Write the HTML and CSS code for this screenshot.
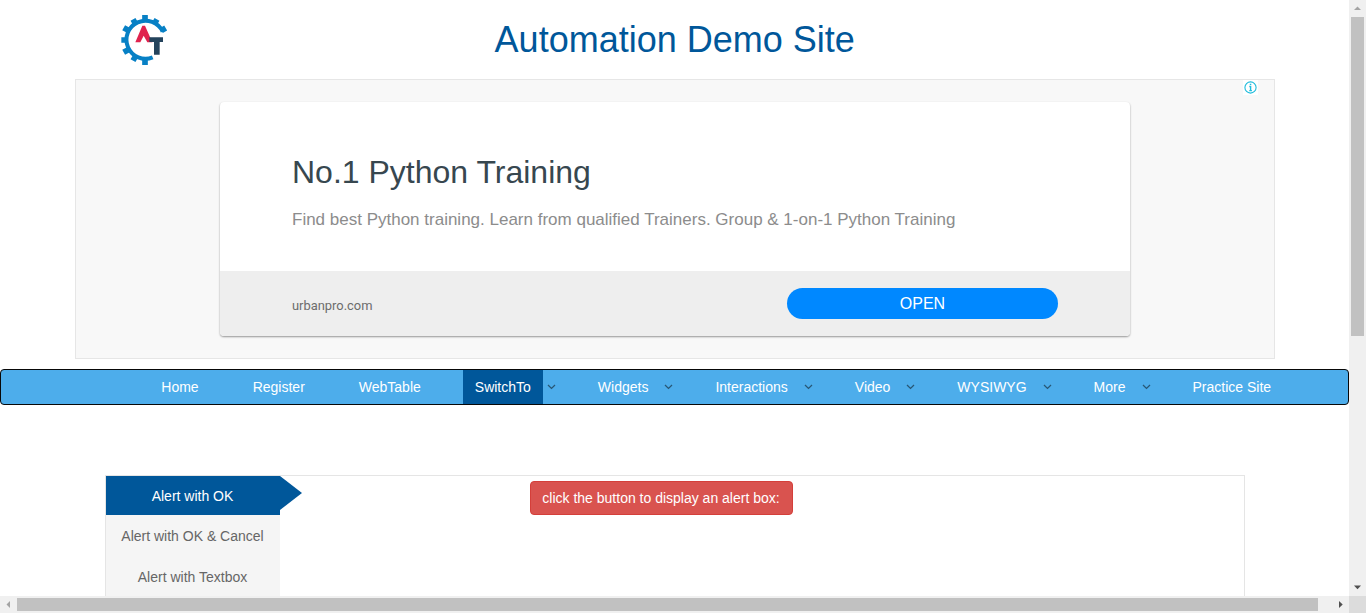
FILE: index.html
```html
<!DOCTYPE html>
<html lang="en">
<head>
<meta charset="utf-8">
<title>Alerts</title>
<link rel="stylesheet" href="styles.css">
</head>
<body>
<div class="window">
  <div class="page">
    <header class="header">
      <svg class="logo" viewBox="0 0 210 210" aria-label="Automation Testing">
        <g fill="none" stroke="#0780c5">
          <path d="M158 80A57 57 0 1 0 128 157" stroke-width="12"/>
          <g stroke-width="17">
            <path d="M105 47V30M134 55L141 43M154 77L167 69M76 55L69 43M55 76L41 68M47 105H34M55 134L41 142M76 155L69 167M105 163V180"/>
          </g>
        </g>
        <path d="M97 62H105L127 112H112L101 92L91 112H76Z" fill="#e0234e"/>
        <path d="M118 97H159V111H149V149H132V111H118Z" fill="#24435c"/>
      </svg>
      <h1 class="title">Automation Demo Site</h1>
    </header>

    <section class="ad">
      <svg class="ad-info" viewBox="0 0 15 15">
        <circle cx="7.5" cy="7.5" r="5.6" fill="none" stroke="#1ebcdc" stroke-width="1.1"/>
        <path d="M6.3 6.5H7.6V10.5M6.3 10.6H8.9M6.8 4.4H8.3" fill="none" stroke="#1ebcdc" stroke-width="1.4"/>
      </svg>
      <div class="ad-card">
        <div class="ad-body">
          <h2 class="ad-title">No.1 Python Training</h2>
          <p class="ad-text">Find best Python training. Learn from qualified Trainers. Group &amp; 1-on-1 Python Training</p>
        </div>
        <div class="ad-foot">
          <span class="ad-domain">urbanpro.com</span>
          <a class="ad-open">OPEN</a>
        </div>
      </div>
    </section>

    <nav class="nav">
      <div class="item"><a>Home</a></div>
      <div class="item"><a>Register</a></div>
      <div class="item"><a>WebTable</a></div>
      <div class="item"><a class="active">SwitchTo</a><svg class="caret" viewBox="0 0 13 8"><path d="M5 2L8.5 5.4L12 2"/></svg></div>
      <div class="item"><a>Widgets</a><svg class="caret" viewBox="0 0 13 8"><path d="M5 2L8.5 5.4L12 2"/></svg></div>
      <div class="item"><a>Interactions</a><svg class="caret" viewBox="0 0 13 8"><path d="M5 2L8.5 5.4L12 2"/></svg></div>
      <div class="item"><a>Video</a><svg class="caret" viewBox="0 0 13 8"><path d="M5 2L8.5 5.4L12 2"/></svg></div>
      <div class="item"><a>WYSIWYG</a><svg class="caret" viewBox="0 0 13 8"><path d="M5 2L8.5 5.4L12 2"/></svg></div>
      <div class="item"><a>More</a><svg class="caret" viewBox="0 0 13 8"><path d="M5 2L8.5 5.4L12 2"/></svg></div>
      <div class="item"><a>Practice Site</a></div>
    </nav>

    <main class="panel">
      <div class="tabs">
        <a class="tab tab-active">Alert with OK</a>
        <a class="tab">Alert with OK &amp; Cancel</a>
        <a class="tab">Alert with Textbox</a>
      </div>
      <svg class="pointer" viewBox="0 0 22 34"><path d="M0 0L22 17L0 34Z" fill="#00579a"/></svg>
      <button class="danger">click the button to display an alert box:</button>
    </main>
  </div>

  <div class="vbar">
    <svg class="arrow" viewBox="0 0 17 17"><path d="M5 10L8.5 6.5L12 10Z" fill="#a3a3a3"/></svg>
    <div class="vthumb"></div>
    <svg class="arrow arrow-end" viewBox="0 0 17 17"><path d="M5 6.5H12L8.5 10.3Z" fill="#505050"/></svg>
  </div>
  <div class="hbar">
    <svg class="arrow" viewBox="0 0 17 17"><path d="M10 5V12L6.5 8.5Z" fill="#a3a3a3"/></svg>
    <div class="hthumb"></div>
    <svg class="arrow arrow-right" viewBox="0 0 17 17"><path d="M7 5V12L10.7 8.5Z" fill="#505050"/></svg>
  </div>
  <div class="corner"></div>
</div>
</body>
</html>
```
FILE: styles.css
```css
* { box-sizing: border-box; }
body { margin: 0; font-family: "Liberation Sans", Arial, sans-serif; font-size: 14px; line-height: 20px; background: #fff; }
.window { display: grid; grid-template-columns: 1349px 17px; grid-template-rows: 596px 17px; width: 1366px; height: 613px; overflow: hidden; }
.page { overflow: hidden; height: 596px; display: flex; flex-direction: column; }

.header { display: grid; grid-template-columns: 384.6px 1fr; padding-left: 110px; height: 79px; flex: none; }
.logo { width: 70px; height: 70px; margin-top: 5px; }
.title { margin: 20px 0 0; font-size: 36px; font-weight: 400; line-height: 40px; color: #00579a; }

.ad { position: relative; flex: none; width: 1200px; height: 280px; margin-left: 75px; padding: 22px 144px 0; border: 1px solid #e6e6e6; background: #f8f8f8; }
.ad-info { position: absolute; top: 0; right: 16px; width: 15px; height: 15px; background: #fff; }
.ad-card { width: 910px; height: 234px; border-radius: 4px; overflow: hidden; background: #fff; box-shadow: 0 1px 2px rgba(0,0,0,.4); }
.ad-body { height: 169px; padding: 50px 72px 0; }
.ad-title { margin: 0; font-size: 32px; font-weight: 400; line-height: 40px; color: #37474f; }
.ad-text { margin: 17px 0 0; font-size: 17px; line-height: 22px; color: #8c8c8c; white-space: nowrap; }
.ad-foot { display: flex; justify-content: space-between; align-items: center; height: 65px; padding: 0 72px; background: #eee; }
.ad-domain { padding-top: 4px; font: 12.9px/20px Roboto, sans-serif; color: #6c6c6c; }
.ad-open { width: 271px; height: 31px; border-radius: 16px; background: #08f; color: #fff; font-size: 16px; line-height: 31px; text-align: center; }

.nav { display: flex; gap: 30px; flex: none; height: 36px; margin-top: 10px; padding-left: 148.3px; border: 1px solid #080808; border-radius: 4px; background: #4dadeb; }
.item { display: flex; align-items: center; color: #fff; white-space: nowrap; }
.item a { padding: 7px 12px; height: 34px; }
.item .active { background: #00579a; }
.caret { width: 13px; height: 8px; fill: none; stroke: #285775; stroke-width: 1.3; }

.panel { display: flex; align-items: flex-start; flex: none; width: 1140px; height: 300px; margin: 70px 0 0 105px; border: 1px solid #e5e5e5; }
.tabs { display: flex; flex-direction: column; width: 174px; height: 300px; background: #f5f5f5; }
.tab { height: 41px; padding: 11px 1px 0 0; text-align: center; color: #666; }
.tab-active { height: 39px; padding-top: 10px; background: #00579a; color: #fff; }
.pointer { width: 22px; height: 34px; }
.danger { width: 263px; height: 34px; margin: 5px 0 0 228px; padding: 0 1px 0 0; border: 1px solid #d43f3a; border-radius: 4px; background: #d9534f; color: #fff; font: 14px/20px "Liberation Sans", Arial, sans-serif; }

.vbar { display: flex; flex-direction: column; align-items: center; background: #f0f0f0; }
.hbar { display: flex; align-items: center; background: #f0f0f0; }
.arrow { width: 17px; height: 17px; flex: none; }
.arrow-end { margin-top: auto; }
.arrow-right { margin-left: auto; }
.vthumb { width: 13px; height: 319px; background: #c1c1c1; }
.hthumb { width: 1301px; height: 13px; background: #c1c1c1; }
.corner { background: #dcdcdc; }
```
